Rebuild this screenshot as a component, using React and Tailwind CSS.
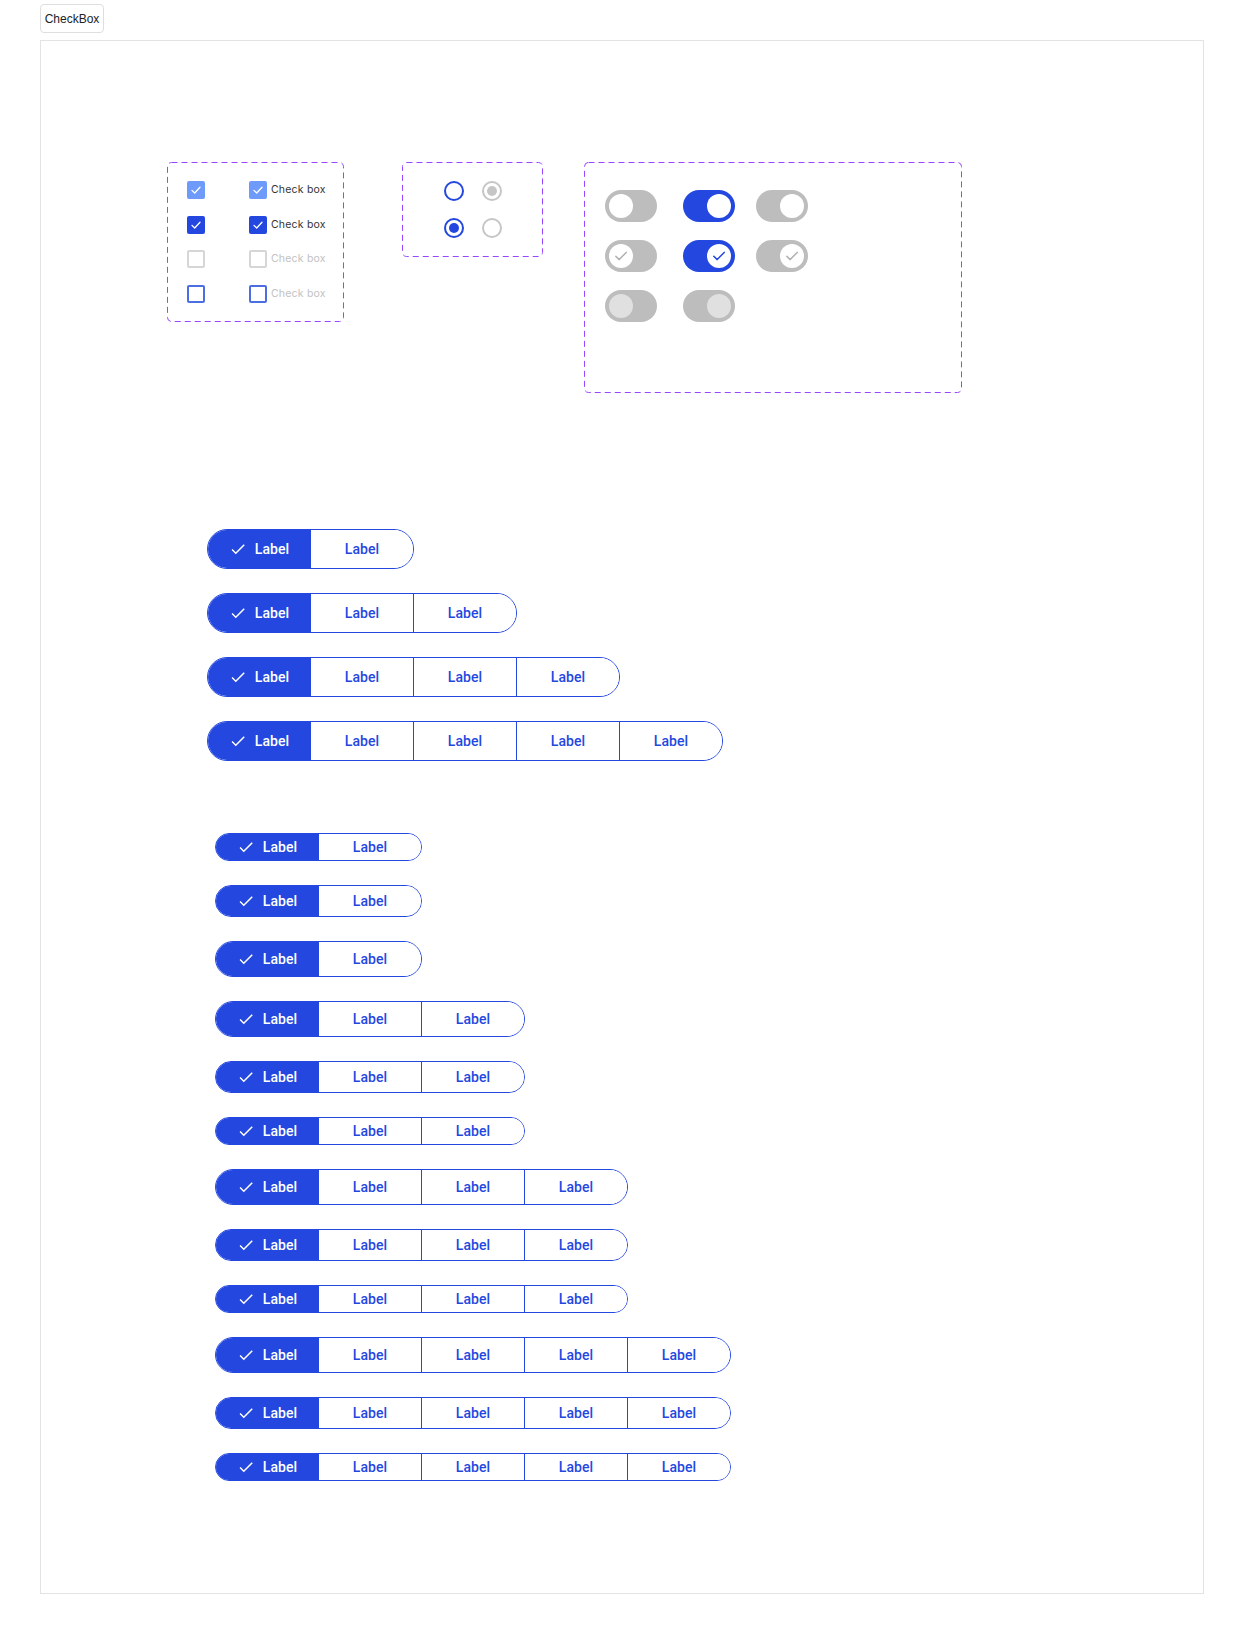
import React from 'react';

// outlined dashed frame, like figma's component-set border
const Dashed = ({ w, h, className, children }) => (
  <div className={`relative shrink-0 ${className}`}>
    <svg className="absolute left-0 top-0 pointer-events-none" width={w} height={h}>
      <rect x="0.5" y="0.5" width={w - 1} height={h - 1} rx="4" fill="none" stroke="#9747ff" strokeWidth="1" strokeDasharray="6 4" />
    </svg>
    {children}
  </div>
);

const TinyCheck = ({ color = 'white' }) => (
  <svg width="18" height="18" viewBox="0 0 18 18">
    <path d="M5 9.4l2.7 2.6L13 6.3" fill="none" stroke={color} strokeWidth="1.3" strokeLinecap="round" strokeLinejoin="round" />
  </svg>
);

const Box = ({ kind }) => {
  if (kind === 'light') {
    return (
      <div className="w-[18px] h-[18px] rounded-[2px] bg-[#6e9bfa] shrink-0">
        <TinyCheck />
      </div>
    );
  }
  if (kind === 'checked') {
    return (
      <div className="w-[18px] h-[18px] rounded-[2px] bg-[#2448df] shrink-0">
        <TinyCheck />
      </div>
    );
  }
  if (kind === 'disabled') {
    return <div className="w-[18px] h-[18px] rounded-[2px] border-2 border-[#d6d6d6] shrink-0" />;
  }
  return <div className="w-[18px] h-[18px] rounded-[2px] border-2 border-[#4b6ee0] shrink-0" />;
};

const checkRows = [
  { kind: 'light', text: 'text-[#333333]' },
  { kind: 'checked', text: 'text-[#333333]' },
  { kind: 'disabled', text: 'text-[#c2c2c2]' },
  { kind: 'outline', text: 'text-[#c2c2c2]' },
];

const Radio = ({ checked, disabled }) => (
  <div
    className={`w-5 h-5 rounded-full border-2 flex items-center justify-center shrink-0 ${
      disabled ? 'border-[#c6c6c6]' : 'border-[#2448df]'
    }`}
  >
    {checked && (
      <div className={`w-[10px] h-[10px] rounded-full ${disabled ? 'bg-[#c6c6c6]' : 'bg-[#2448df]'}`} />
    )}
  </div>
);

const KnobCheck = ({ color }) => (
  <svg width="24" height="24" viewBox="0 0 24 24">
    <path d="M6.8 12.3l3.4 3.3 7-7.2" fill="none" stroke={color} strokeWidth="1.5" strokeLinecap="round" strokeLinejoin="round" />
  </svg>
);

const Toggle = ({ on, active, check, dim, className = '' }) => (
  <div
    className={`w-[52px] h-[32px] rounded-full px-1 flex items-center shrink-0 ${
      on ? 'justify-end' : 'justify-start'
    } ${active ? 'bg-[#2448df]' : 'bg-[#bdbdbd]'} ${className}`}
  >
    <div className={`w-6 h-6 rounded-full ${dim ? 'bg-[#e0e0e0]' : 'bg-white'}`}>
      {check && <KnobCheck color={active ? '#2448df' : '#b0b0b0'} />}
    </div>
  </div>
);

const SegCheck = () => (
  <svg width="18" height="18" viewBox="0 0 24 24" className="shrink-0">
    <path d="M9 16.17L4.83 12l-1.42 1.41L9 19 21 7l-1.41-1.41z" fill="white" />
  </svg>
);

const Segmented = ({ n, h }) => (
  <div
    className={`flex ${h} w-fit border border-[#2448df] rounded-full overflow-hidden font-['Roboto',sans-serif] text-[14px] font-medium tracking-[0.1px]`}
  >
    <div className="w-[102px] bg-[#2448df] text-white flex items-center justify-center gap-2">
      <SegCheck />
      <span>Label</span>
    </div>
    {Array.from({ length: n - 1 }).map((_, i) => (
      <div key={i} className="w-[103px] border-l border-[#2448df] text-[#2448df] bg-white flex items-center justify-center">
        Label
      </div>
    ))}
  </div>
);

// dense variants, heights as in the spec sheet
const smallRows = [
  { n: 2, h: 'h-[28px]' },
  { n: 2, h: 'h-[32px]' },
  { n: 2, h: 'h-[36px]' },
  { n: 3, h: 'h-[36px]' },
  { n: 3, h: 'h-[32px]' },
  { n: 3, h: 'h-[28px]' },
  { n: 4, h: 'h-[36px]' },
  { n: 4, h: 'h-[32px]' },
  { n: 4, h: 'h-[28px]' },
  { n: 5, h: 'h-[36px]' },
  { n: 5, h: 'h-[32px]' },
  { n: 5, h: 'h-[28px]' },
];

const App = () => {
  return (
    <div className="bg-white min-h-screen pt-[4px] pl-[40px] pb-10">
      <button className="h-[29px] w-[64px] border border-[#dedede] rounded-[4px] bg-white text-[12px] text-[#222] font-['Liberation_Sans',Arial,sans-serif]">
        CheckBox
      </button>

      <div className="mt-[7px] w-[1164px] h-[1554px] border border-[#e3e3e3] pt-[121px]">
        {/* top row: checkbox, radio, switch sets */}
        <div className="flex items-start pl-[126px]">
          <Dashed w={177} h={160} className="w-[177px] h-[160px] pt-[19px] px-[20px]">
            <div className="flex flex-col gap-[16.5px]">
              {checkRows.map((r) => (
                <div key={r.kind} className="flex items-center">
                  <Box kind={r.kind} />
                  <div className="ml-[44px] flex items-center gap-1">
                    <Box kind={r.kind} />
                    <span className={`whitespace-nowrap font-['Inter',sans-serif] text-[10.5px] tracking-[0.2px] ${r.text}`}>
                      Check box
                    </span>
                  </div>
                </div>
              ))}
            </div>
          </Dashed>

          <Dashed w={141} h={95} className="ml-[58px] w-[141px] h-[95px] pt-[19px] pl-[42px]">
            <div className="flex flex-col gap-[17px]">
              <div className="flex gap-[18px]">
                <Radio />
                <Radio checked disabled />
              </div>
              <div className="flex gap-[18px]">
                <Radio checked />
                <Radio disabled />
              </div>
            </div>
          </Dashed>

          <Dashed w={378} h={231} className="ml-[41px] w-[378px] h-[231px] pt-[28px] pl-[21px]">
            <div className="flex flex-col gap-[18px]">
              <div className="flex">
                <Toggle />
                <Toggle on active className="ml-[26px]" />
                <Toggle on className="ml-[21px]" />
              </div>
              <div className="flex">
                <Toggle check />
                <Toggle on active check className="ml-[26px]" />
                <Toggle on check className="ml-[21px]" />
              </div>
              <div className="flex">
                <Toggle dim />
                <Toggle on dim className="ml-[26px]" />
              </div>
            </div>
          </Dashed>
        </div>

        {/* segmented buttons, default density */}
        <div className="mt-[136px] pl-[166px] flex flex-col items-start gap-6">
          <Segmented n={2} h="h-[40px]" />
          <Segmented n={3} h="h-[40px]" />
          <Segmented n={4} h="h-[40px]" />
          <Segmented n={5} h="h-[40px]" />
        </div>

        {/* segmented buttons, dense variants */}
        <div className="mt-[72px] pl-[174px] flex flex-col items-start gap-6">
          {smallRows.map((r, i) => (
            <Segmented key={i} n={r.n} h={r.h} />
          ))}
        </div>
      </div>
    </div>
  );
};

export default App;
